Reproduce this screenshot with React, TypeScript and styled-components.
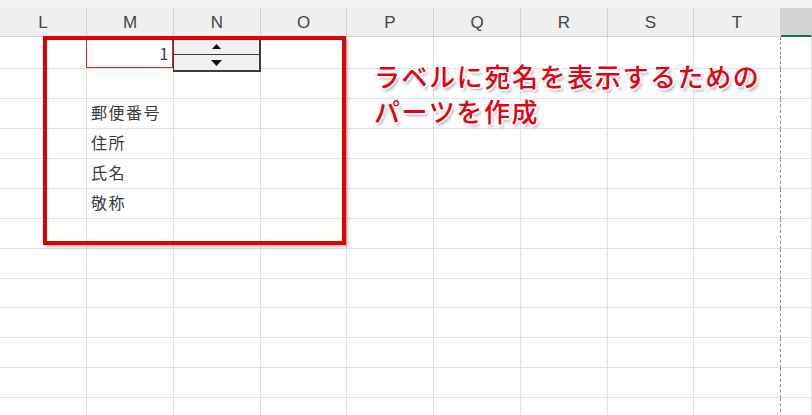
import React from 'react'
import styled, { createGlobalStyle } from 'styled-components'

const GlobalStyle = createGlobalStyle`
  html, body {
    margin: 0;
    padding: 0;
    background: #ffffff;
    overflow: hidden;
  }
`

const TEMPLATE = '87px 87px 87px 86px 87px 87px 87px 86px 87px 1fr'
const GRID = '#e0e0e0'
const COLS = ['L', 'M', 'N', 'O', 'P', 'Q', 'R', 'S', 'T', '']

interface CellData {
  text?: string,
  align?: 'left' | 'right',
  boxed?: boolean,
}

const ROWS: { height: number, cells: { [col: number]: CellData } }[] = [
  { height: 32, cells: { 1: { text: '1', align: 'right', boxed: true } } },
  { height: 30, cells: {} },
  { height: 30, cells: { 1: { text: '郵便番号' } } },
  { height: 30, cells: { 1: { text: '住所' } } },
  { height: 30, cells: { 1: { text: '氏名' } } },
  { height: 30, cells: { 1: { text: '敬称' } } },
  { height: 30, cells: {} },
  { height: 30, cells: {} },
  { height: 29, cells: {} },
  { height: 30, cells: {} },
  { height: 30, cells: {} },
  { height: 30, cells: {} },
  { height: 30, cells: {} },
]

const App: React.FC = () => {
  return (
    <>
      <GlobalStyle />
      <Sheet>
        <TopStrip />
        <HeaderRow>
          {COLS.map((c, i) => (
            <HeaderCell key={i} $selected={c === ''}>{c}</HeaderCell>
          ))}
        </HeaderRow>
        {ROWS.map((row, r) => (
          <Row key={r} $height={row.height}>
            {COLS.map((_, i) => {
              const cell = row.cells[i]
              return (
                <Cell
                  key={i}
                  $align={cell?.align ?? 'left'}
                  $boxed={!!cell?.boxed}
                  $pageBreak={i === 8}
                >
                  {cell?.text}
                </Cell>
              )
            })}
          </Row>
        ))}

        <Spinner>
          <SpinButton>
            <svg width="9" height="5" viewBox="0 0 9 5"><path d="M4.5 0 L9 5 L0 5 Z" fill="#111" /></svg>
          </SpinButton>
          <SpinButton>
            <svg width="11" height="6" viewBox="0 0 11 6"><path d="M0 0 L11 0 L5.5 6 Z" fill="#111" /></svg>
          </SpinButton>
        </Spinner>

        <RedFrame />

        <Callout>
          ラベルに宛名を表示するための<br />
          パーツを作成
        </Callout>
      </Sheet>
    </>
  )
}

const Sheet = styled.div`
  position: relative;
  width: 812px;
  height: 415px;
  overflow: hidden;
  font-family: "Noto Sans CJK JP", "Noto Sans", sans-serif;
`

const TopStrip = styled.div`
  height: 8px;
  background: #f3f3f3;
`

const HeaderRow = styled.div`
  display: grid;
  grid-template-columns: ${TEMPLATE};
  height: 29px;
`

const HeaderCell = styled.div<{ $selected: boolean }>`
  box-sizing: border-box;
  display: flex;
  align-items: center;
  justify-content: center;
  background: ${p => (p.$selected ? '#d3d3d3' : '#efefef')};
  border-right: 1px solid #d2d2d2;
  border-bottom: ${p => (p.$selected ? '2px solid #217346' : '1px solid #cfcfcf')};
  color: #444;
  font-family: "Liberation Sans", "Noto Sans", sans-serif;
  font-size: 17px;
  padding-top: 1px;
`

const Row = styled.div<{ $height: number }>`
  display: grid;
  grid-template-columns: ${TEMPLATE};
  height: ${p => p.$height}px;
`

const Cell = styled.div<{ $align: 'left' | 'right', $boxed: boolean, $pageBreak: boolean }>`
  position: relative;
  box-sizing: border-box;
  display: flex;
  align-items: center;
  justify-content: ${p => (p.$align === 'right' ? 'flex-end' : 'flex-start')};
  padding: ${p => (p.$align === 'right' ? '0 3px 0 0' : '0 0 3px 4px')};
  border-right: ${p => (p.$pageBreak ? '1px dashed #8a8a8a' : `1px solid ${GRID}`)};
  border-bottom: 1px solid ${GRID};
  color: #3a3a3a;
  font-size: 16px;
  letter-spacing: 1.5px;
  white-space: nowrap;

  &::after {
    content: '';
    display: ${p => (p.$boxed ? 'block' : 'none')};
    position: absolute;
    left: -1px;
    top: 1px;
    right: 0;
    bottom: 0;
    border: 1px solid #ee1c1c;
    pointer-events: none;
  }
`

const Spinner = styled.div`
  position: absolute;
  left: 173px;
  top: 38px;
  width: 88px;
  display: flex;
  flex-direction: column;
  border: 1px solid #3c3c3c;
  border-right-width: 2px;
  border-bottom-width: 2px;
  box-sizing: border-box;
  background: #f0f0f0;
`

const SpinButton = styled.div`
  height: 15px;
  display: flex;
  align-items: center;
  justify-content: center;
  background: #f0f0f0;

  & + & {
    border-top: 1px solid #3c3c3c;
  }
`

const RedFrame = styled.div`
  position: absolute;
  left: 43px;
  top: 36px;
  width: 303px;
  height: 209px;
  box-sizing: border-box;
  border: 4px solid #e00000;
  box-shadow: 2px 2px 3px rgba(0, 0, 0, 0.25);
`

const Callout = styled.div`
  position: absolute;
  left: 374px;
  top: 58px;
  color: #e60012;
  font-size: 26px;
  font-weight: 500;
  line-height: 35px;
  letter-spacing: 1.6px;
  white-space: nowrap;
  text-shadow:
    1px 1px 0 #fff, -1px -1px 0 #fff, 1px -1px 0 #fff, -1px 1px 0 #fff,
    2px 0 0 #fff, -2px 0 0 #fff, 0 2px 0 #fff, 0 -2px 0 #fff,
    2px 3px 3px rgba(0, 0, 0, 0.35);
`

export default App
